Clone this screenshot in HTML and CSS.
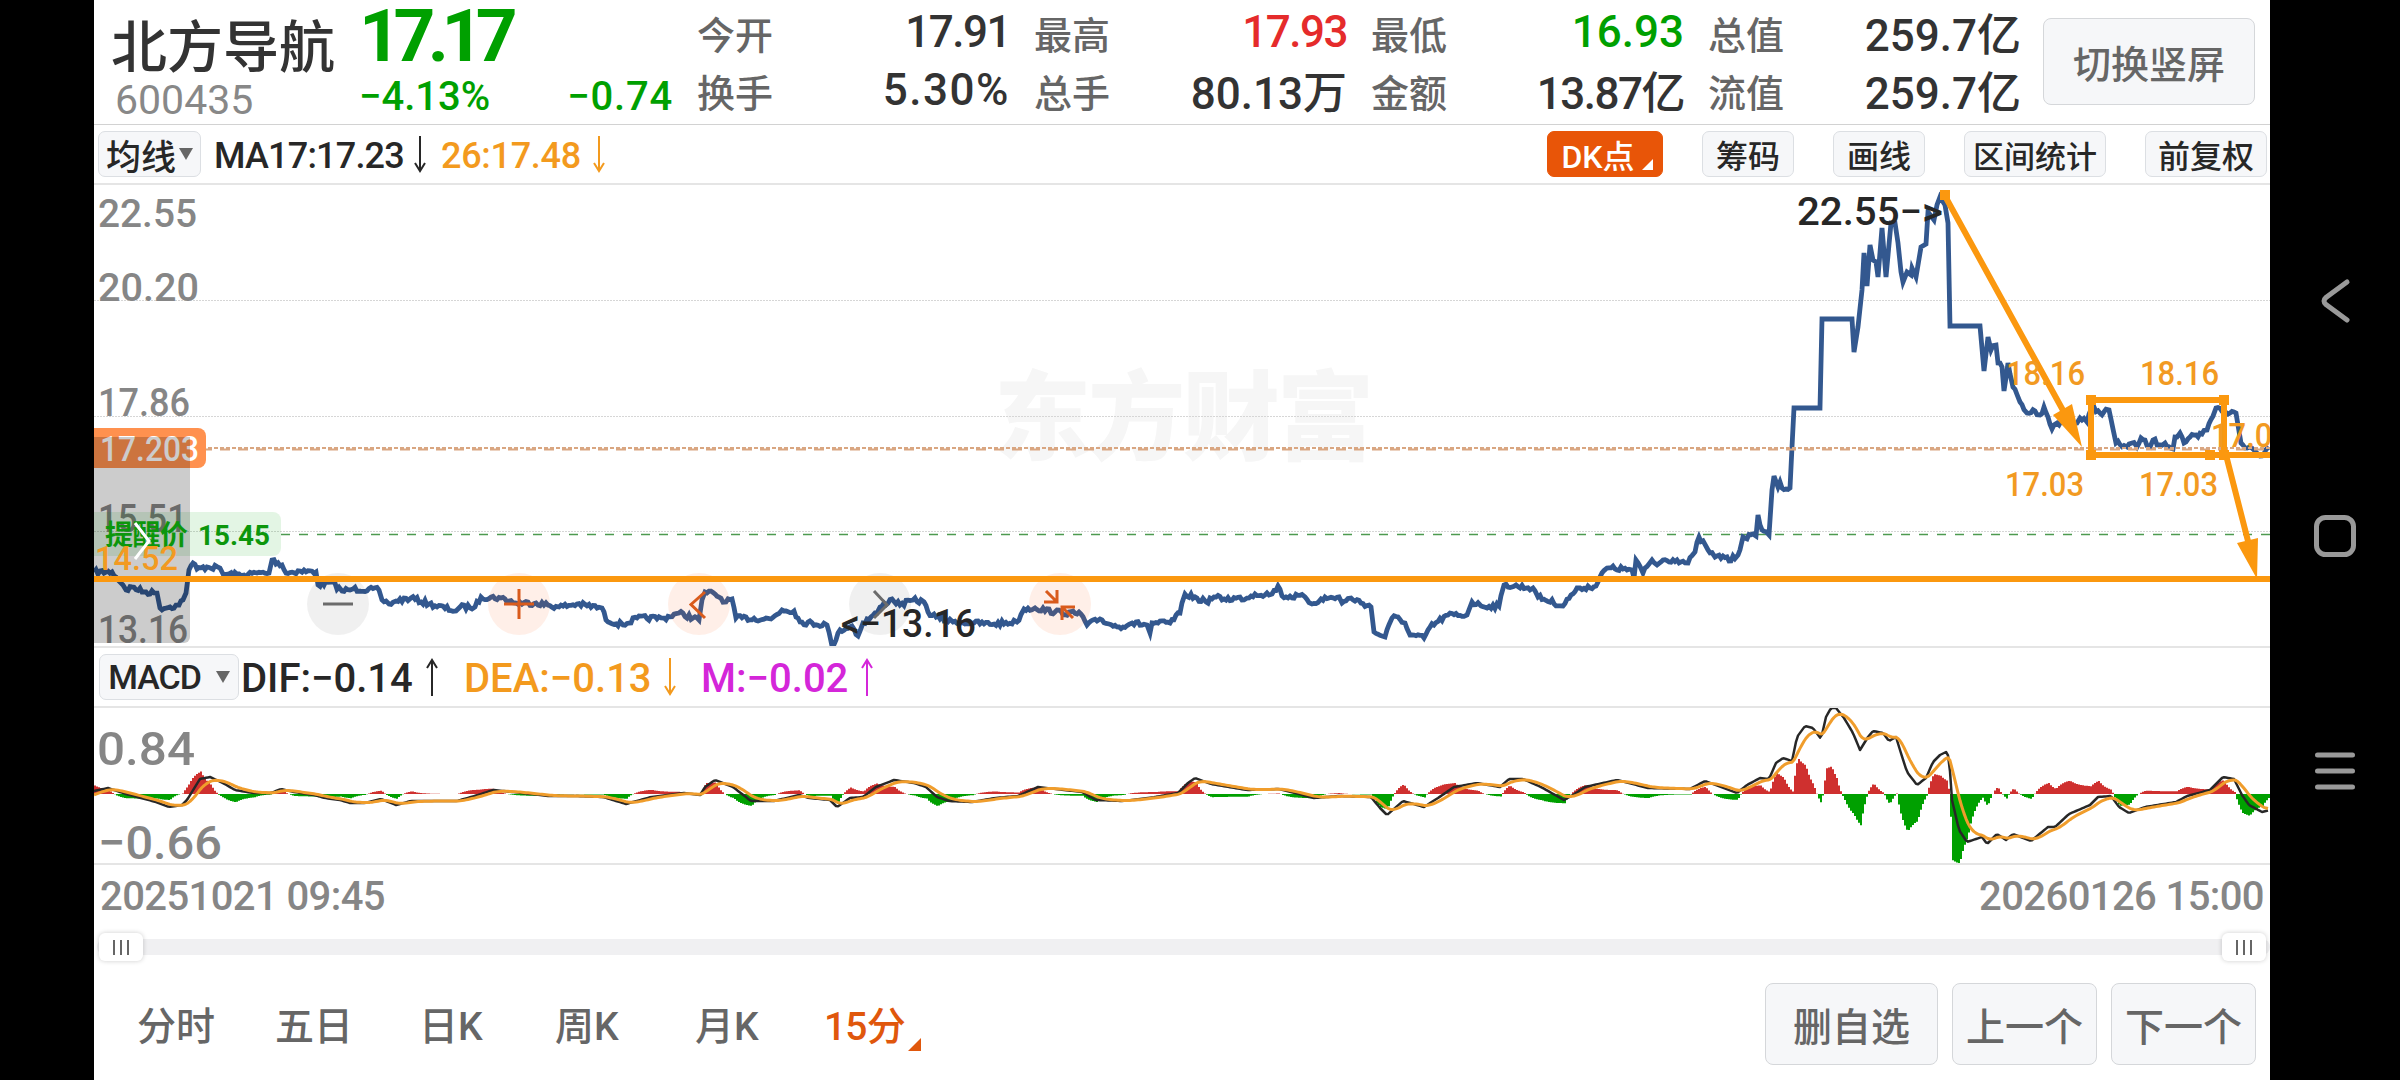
FILE: index.html
```html
<!DOCTYPE html>
<html lang="zh-CN">
<head>
    <meta charset="utf-8">
    <title>北方导航 600435</title>
    <link rel="stylesheet" href="styles.css">
</head>

<body>

  <div class="app">

    <div class="header">
      <div class="stock">
        <h1>北方导航</h1>
        <span class="code">600435</span>
      </div>
      <div class="price">
        <div class="now">17.17</div>
        <div class="change"><span>−4.13%</span><span class="diff">−0.74</span></div>
      </div>
      <div class="quotes">
        <div class="q"><label>今开</label><b>17.91</b></div>
        <div class="q"><label>最高</label><b class="red">17.93</b></div>
        <div class="q"><label>最低</label><b class="green loose">16.93</b></div>
        <div class="q"><label>总值</label><b class="loose">259.7亿</b></div>
        <div class="q"><label>换手</label><b class="looser">5.30%</b></div>
        <div class="q"><label>总手</label><b class="loose">80.13万</b></div>
        <div class="q"><label>金额</label><b>13.87亿</b></div>
        <div class="q"><label>流值</label><b class="loose">259.7亿</b></div>
      </div>
      <button class="btn btnSwitch">切换竖屏</button>
    </div>

    <div class="bar maBar">
      <button class="chip select">均线<i class="caret"></i></button>
      <span class="ma">MA17:17.23</span>
      <svg class="arrow" width="14" height="38" viewBox="0 0 14 38"><path d="M7 1V34M2 28L7 36L12 28"/></svg>
      <span class="ma orange">26:17.48</span>
      <svg class="arrow orange" width="14" height="38" viewBox="0 0 14 38"><path d="M7 1V34M2 28L7 36L12 28"/></svg>
      <div class="tools">
        <button class="chip dk">DK点<i class="corner"></i></button>
        <button class="chip">筹码</button>
        <button class="chip">画线</button>
        <button class="chip">区间统计</button>
        <button class="chip fq">前复权</button>
      </div>
    </div>

    <svg class="kline" width="2176" height="461" viewBox="94 185 2176 461">
      <text class="watermark" x="994" y="452" textLength="380">东方财富</text>
      <g class="grid">
        <path d="M94 300.5H2270M94 416.500H2270M94 531.5H2270"/>
      </g>
      <g class="axis">
        <text x="98" y="227" textLength="99" lengthAdjust="spacingAndGlyphs">22.55</text>
        <text x="98" y="301" textLength="101" lengthAdjust="spacingAndGlyphs">20.20</text>
        <text x="98" y="416" textLength="92" lengthAdjust="spacingAndGlyphs">17.86</text>
        <text x="98" y="532" textLength="89" lengthAdjust="spacingAndGlyphs">15.51</text>
        <text x="98" y="643" textLength="90" lengthAdjust="spacingAndGlyphs">13.16</text>
      </g>

      <path class="remindBox" d="M94 512H273a8 8 0 0 1 8 8V548a8 8 0 0 1-8 8H94Z"/>
      <path class="remindLine" d="M281 534.5H2270"/>

      <polyline id="priceLine" class="priceLine"/>
      <g class="avg">
        <path class="avg1" d="M94 448H2270"/>
        <path class="avg2" d="M94 449.5H2270"/>
      </g>
      <path class="priceTag" d="M94 428H198a8 8 0 0 1 8 8V460a8 8 0 0 1-8 8H94Z"/>
      <text class="priceTagText" x="100" y="461" textLength="99" lengthAdjust="spacingAndGlyphs">17.203</text>

      <g class="mark">
        <text x="1797" y="225" textLength="146" lengthAdjust="spacingAndGlyphs">22.55−&gt;</text>
        <text x="841" y="637" textLength="135" lengthAdjust="spacingAndGlyphs">&lt;−13.16</text>
      </g>

      <!-- zoom / pan buttons -->
      <g class="pads">
        <circle class="grayPad" cx="338" cy="604" r="31"/>
        <circle cx="519" cy="604" r="31"/>
        <circle cx="699" cy="604" r="31"/>
        <circle class="grayPad" cx="880" cy="604" r="31"/>
        <circle cx="1060" cy="604" r="31"/>
        <path class="grayIcon" d="M323 604H353M874 591L887 605L874 618"/>
        <path d="M504 604H534M519 589V619M705 592L691 604.5L705 618"/>
        <path d="M1046 591L1057 602M1057 590V602H1044M1073 618L1062 607M1062 620V607H1075"/>
      </g>

      <path class="side" d="M94 437H190V637a6 6 0 0 1-6 6H94Z"/>
      <text class="remindText" x="105" y="545" textLength="83">提醒价</text>
      <text class="remindText" x="198" y="545" textLength="72" lengthAdjust="spacingAndGlyphs">15.45</text>

      <!-- hand drawn lines -->
      <g class="draw">
        <path d="M94 579H2270"/>
        <path d="M1945 196L2065 414M2226 455L2249 545"/>
        <path d="M2091 400H2224V455H2091ZM2224 455H2270"/>
        <path class="solid" d="M2053 415L2072 404L2082 447ZM2237 543L2258 538L2257 579Z"/>
        <path class="solid" d="M1940 190h10v10h-10ZM2086 395h10v10h-10ZM2219 395h10v10h-10ZM2086 450h10v10h-10ZM2205 450h10v10h-10ZM2219 450h10v10h-10Z"/>
        <text x="95" y="570" textLength="83" lengthAdjust="spacingAndGlyphs">14.52</text>
        <text x="2006" y="385" textLength="79" lengthAdjust="spacingAndGlyphs">18.16</text>
        <text x="2140" y="385" textLength="79" lengthAdjust="spacingAndGlyphs">18.16</text>
        <text x="2005" y="496" textLength="79" lengthAdjust="spacingAndGlyphs">17.03</text>
        <text x="2139" y="496" textLength="79" lengthAdjust="spacingAndGlyphs">17.03</text>
        <text x="2211" y="447" textLength="79" lengthAdjust="spacingAndGlyphs">17.03</text>
      </g>
      <path class="sideArrow" d="M135 523L149 541L135 559"/>
    </svg>

    <div class="bar macdBar">
      <button class="chip select">MACD<i class="caret"></i></button>
      <span class="v dif">DIF:−0.14</span>
      <svg class="arrow" width="14" height="40" viewBox="0 0 14 40"><path d="M7 39V4M2 11L7 3L12 11"/></svg>
      <span class="v dea orange">DEA:−0.13</span>
      <svg class="arrow orange" width="14" height="40" viewBox="0 0 14 40"><path d="M7 1V36M2 29L7 37L12 29"/></svg>
      <span class="v m purple">M:−0.02</span>
      <svg class="arrow purple" width="14" height="40" viewBox="0 0 14 40"><path d="M7 39V4M2 11L7 3L12 11"/></svg>
    </div>

    <svg class="macd" width="2176" height="155" viewBox="94 708 2176 155">
      <g class="axis big">
        <text x="97" y="765" textLength="98" lengthAdjust="spacingAndGlyphs">0.84</text>
        <text x="98" y="859" textLength="124" lengthAdjust="spacingAndGlyphs">−0.66</text>
      </g>
      <path id="barsUp" class="barsUp"/>
      <path id="barsDown" class="barsDown"/>
      <polyline id="difLine" class="difLine"/>
      <polyline id="deaLine" class="deaLine"/>
    </svg>

    <div class="dates"><span>20251021 09:45</span><span>20260126 15:00</span></div>

    <div class="slider">
      <div class="handle"><i></i><i></i><i></i></div>
      <div class="handle"><i></i><i></i><i></i></div>
    </div>

    <div class="footer">
      <div class="tabs">
        <span>分时</span>
        <span>五日</span>
        <span>日K</span>
        <span>周K</span>
        <span>月K</span>
        <span class="active">15分<i class="corner"></i></span>
      </div>
      <div class="actions">
        <button class="btn wide">删自选</button>
        <button class="btn">上一个</button>
        <button class="btn">下一个</button>
      </div>
    </div>
  </div>

  <div class="nav">
    <svg width="48" height="48" viewBox="0 0 48 48"><path d="M36 5L15 20.500Q11 24 15 27.500L36 43"/></svg>
    <svg width="48" height="48" viewBox="0 0 48 48"><rect x="5.500" y="5.500" width="37" height="37" rx="9"/></svg>
    <svg width="48" height="48" viewBox="0 0 48 48"><path d="M6.500 8H41.500M6.500 24H41.500M6.500 40H41.500"/></svg>
  </div>

    <script type="text/javascript">
        const price = [
            [94,572],[112,572],[123,585],[126,590],[132,587],[144,592],[157,593],[160,608],[170,607],[179,605],[186,593],[189,570],
            [193,563],[197,569],[207,567],[220,568],[223,574],[244,575],[257,573],[269,573],[272,560],[282,565],[286,573],[300,571],
            [316,572],[318,585],[331,582],[342,591],[353,589],[379,590],[382,600],[389,604],[396,601],[411,598],[429,604],[456,611],
            [460,607],[475,607],[481,597],[501,598],[516,603],[536,603],[559,607],[577,604],[602,608],[606,620],[623,625],[637,618],
            [664,618],[679,613],[699,620],[702,600],[705,592],[715,594],[726,602],[732,599],[736,618],[771,619],[782,610],[794,611],
            [800,622],[827,625],[832,646],[836,640],[840,630],[852,626],[858,636],[863,623],[877,613],[880,607],[892,599],[900,605],
            [913,600],[924,602],[928,612],[936,617],[953,622],[974,623],[994,624],[1017,622],[1024,609],[1035,608],[1055,612],
            [1081,614],[1087,625],[1100,619],[1109,624],[1119,627],[1132,623],[1147,625],[1150,633],[1152,623],[1170,623],[1180,613],
            [1185,594],[1206,602],[1214,597],[1224,599],[1247,598],[1255,594],[1272,594],[1278,586],[1282,596],[1305,597],[1312,604],
            [1321,599],[1339,597],[1342,603],[1351,598],[1371,607],[1374,632],[1385,637],[1392,618],[1398,617],[1405,623],[1410,635],
            [1424,638],[1430,627],[1448,615],[1467,615],[1472,602],[1481,606],[1499,606],[1504,585],[1533,588],[1538,597],[1563,606],
            [1571,595],[1580,588],[1596,586],[1600,577],[1607,568],[1623,569],[1632,570],[1634,578],[1636,560],[1643,573],[1652,560],
            [1657,565],[1663,560],[1677,560],[1688,563],[1695,552],[1699,537],[1708,550],[1715,557],[1727,557],[1729,561],[1738,555],
            [1743,537],[1756,536],[1758,515],[1762,530],[1769,535],[1772,490],[1774,476],[1778,487],[1780,482],[1782,488],[1790,488],
            [1792,447],[1794,408],[1820,408],[1822,319],[1852,319],[1854,352],[1858,327],[1862,290],[1864,253],[1867,286],[1870,245],
            [1873,260],[1876,262],[1878,277],[1882,228],[1886,277],[1891,223],[1895,223],[1898,243],[1901,272],[1903,282],[1907,272],
            [1911,275],[1912,268],[1916,277],[1921,247],[1926,244],[1928,212],[1934,220],[1937,205],[1940,197],[1945,205],[1948,223],
            [1950,326],[1980,326],[1984,371],[1988,337],[1991,350],[1996,345],[1998,363],[2002,367],[2004,391],[2008,363],[2013,387],
            [2020,402],[2027,413],[2035,411],[2040,415],[2044,407],[2048,417],[2052,429],[2057,423],[2077,423],[2080,418],[2087,422],
            [2092,407],[2100,413],[2109,410],[2116,443],[2127,447],[2132,443],[2137,447],[2141,438],[2150,447],[2153,440],[2160,445],
            [2165,443],[2173,449],[2175,437],[2180,433],[2184,443],[2190,437],[2198,437],[2207,430],[2216,408],[2230,413],[2236,413],
            [2241,443],[2245,448],[2250,447],[2255,451],[2260,456],[2269,447]
        ];
        const dif = [
            [94,791],[108,788],[126,794],[141,798],[156,802],[169,807],[182,805],[187,800],[195,787],[200,779],[210,777],[223,783],
            [235,790],[253,793],[271,793],[281,789],[294,792],[314,795],[325,798],[340,800],[350,803],[365,803],[381,799],[396,805],
            [411,801],[457,801],[478,795],[493,790],[513,792],[549,796],[575,796],[603,797],[626,804],[651,797],[684,793],[700,795],
            [705,787],[715,780],[733,787],[751,801],[774,801],[799,795],[809,798],[830,800],[837,807],[850,798],[863,797],[876,787],
            [894,780],[914,783],[926,787],[937,797],[949,801],[972,802],[995,798],[1018,796],[1038,787],[1082,792],[1096,800],
            [1123,801],[1155,797],[1178,793],[1188,783],[1195,778],[1211,784],[1247,790],[1279,789],[1314,798],[1339,796],[1371,797],
            [1380,808],[1387,815],[1403,801],[1424,807],[1438,798],[1454,787],[1477,783],[1500,787],[1509,779],[1523,779],[1541,787],
            [1564,800],[1573,795],[1585,787],[1617,780],[1648,788],[1690,789],[1705,781],[1737,793],[1747,785],[1760,778],[1769,779],
            [1776,763],[1783,758],[1792,761],[1797,737],[1805,726],[1813,728],[1821,739],[1826,717],[1831,708],[1836,708],[1844,718],
            [1853,733],[1860,750],[1868,737],[1873,731],[1883,733],[1889,741],[1896,737],[1900,750],[1907,772],[1917,785],[1926,778],
            [1933,762],[1940,755],[1946,752],[1949,757],[1952,800],[1959,830],[1967,842],[1982,837],[1987,844],[1997,834],[2006,840],
            [2013,834],[2031,841],[2048,827],[2055,827],[2069,814],[2090,805],[2098,797],[2111,796],[2119,807],[2129,813],[2145,807],
            [2176,802],[2187,796],[2210,790],[2223,777],[2234,779],[2242,795],[2249,805],[2262,812],[2270,810]
        ];
        const zero = 794;

        // small repeatable noise so the line keeps its tick texture
        let seed = 7;
        function rnd() {
            seed = (seed * 16807) % 2147483647;
            return seed / 2147483647 - 0.5;
        }

        function sample(points, step) {
            const out = [];
            let i = 0;
            for (let x = 94; x <= 2269; x += step) {
                while (i < points.length - 2 && points[i + 1][0] < x) i++;
                const a = points[i], b = points[i + 1];
                out.push([x, a[1] + (b[1] - a[1]) * (x - a[0]) / (b[0] - a[0])]);
            }
            return out;
        }

        const line = [];
        for (let i = 0; i < price.length; i++) {
            const a = price[i], b = price[i + 1];
            line.push(a);
            if (!b || (a[0] > 1785 && a[0] < 1985)) continue;
            for (let x = a[0] + 2; x < b[0] - 1; x += 2) {
                line.push([x, a[1] + (b[1] - a[1]) * (x - a[0]) / (b[0] - a[0]) + rnd() * 5]);
            }
        }
        document.getElementById("priceLine").setAttribute("points", line.join(" "));

        const difs = sample(dif, 2);
        const deas = [];
        let up = "", down = "";
        let dea = 796;
        difs.forEach(([x, y]) => {
            dea += (y - dea) * 0.2;
            deas.push([x, dea]);
            const h = (y - dea) * 2.1;
            if (h < 0) {
                up += `M${x} ${zero}v${h}h2v${-h}Z`;
            } else {
                down += `M${x} ${zero}v${h}h2v${-h}Z`;
            }
        });
        document.getElementById("barsUp").setAttribute("d", up);
        document.getElementById("barsDown").setAttribute("d", down);
        document.getElementById("difLine").setAttribute("points", difs.join(" "));
        document.getElementById("deaLine").setAttribute("points", deas.join(" "));
    </script>
</body>

</html>
```
FILE: styles.css
```css
* {
  box-sizing: border-box;
}
body {
  margin: 0;
  height: 1080px;
  background: #000;
  display: flex;
  padding-left: 94px;
  overflow: hidden;
  color: #272727;
  font-family: Roboto, "Noto Sans CJK SC", sans-serif;
  font-weight: 500;
}

.app {
  width: 2176px;
  height: 1080px;
  background: #fff;
  display: flex;
  flex-direction: column;
}
svg {
  display: block;
}
button {
  font-family: inherit;
  font-weight: 500;
  padding: 0;
  color: inherit;
  white-space: nowrap;
}

.header {
  height: 125px;
  display: flex;
  border-bottom: 1px solid #d2d2d2;
}
.stock {
  width: 265px;
  padding: 14px 0 0 17px;
}
h1 {
  margin: 0;
  font-size: 56px;
  font-weight: 500;
  line-height: 68px;
  color: #333;
}
.code {
  display: block;
  padding-left: 4px;
  font-size: 41px;
  line-height: 36px;
  font-weight: 400;
  color: #888;
}
.price {
  width: 338px;
  color: #00a000;
}
.now {
  font-size: 73px;
  line-height: 72px;
  font-weight: 700;
  letter-spacing: -7.500px;
}
.change {
  display: flex;
  justify-content: space-between;
  width: 314px;
  font-size: 40px;
  line-height: 50px;
}
.change .diff {
  letter-spacing: .8px;
}
.quotes {
  display: grid;
  grid-template-columns: repeat(4, 313px);
  grid-auto-rows: 58px;
  column-gap: 24px;
  padding-top: 3px;
}
.q {
  display: flex;
  justify-content: space-between;
  align-items: center;
}
.q label {
  font-size: 38px;
  color: #666;
}
.q b {
  font-size: 44px;
  font-weight: 500;
  letter-spacing: -1.500px;
  color: #333;
}
.q .loose {
  letter-spacing: 0;
}
.q .looser {
  letter-spacing: 1.500px;
}
.q .red {
  color: #e52b2b;
}
.q .green {
  color: #00a000;
}

.btn {
  width: 145px;
  height: 82px;
  font-size: 39px;
  color: #666;
  background: #f6f7f9;
  border: 1px solid #d5d7da;
  border-radius: 8px;
}
.btnSwitch {
  width: 212px;
  height: 87px;
  font-size: 38px;
  margin: 18px 0 0 22px;
}

.bar {
  display: flex;
  align-items: center;
  border-bottom: 2px solid #e5e5e5;
}
.maBar {
  height: 60px;
  padding: 0 3px 0 4px;
}
.chip {
  display: flex;
  align-items: center;
  justify-content: center;
  width: 92px;
  height: 46px;
  font-size: 32px;
  background: #f6f7f9;
  border: 1px solid #dcdfe3;
  border-radius: 7px;
}
.maBar .select {
  width: 103px;
  font-size: 35px;
}
.caret {
  margin-left: 3px;
  border: 7px solid transparent;
  border-top: 12px solid #666;
  border-bottom: 0;
}
.ma {
  font-size: 36px;
  width: 193px;
  margin-left: 13px;
}
.ma.orange {
  width: 145px;
  margin-left: 14px;
}
.arrow {
  fill: none;
  stroke: currentColor;
  stroke-width: 2;
}
.maBar .arrow {
  margin-left: 6px;
}
.maBar .ma {
  letter-spacing: -.8px;
  padding-top: 3px;
}
.maBar .ma.orange {
  letter-spacing: -.3px;
}
.orange {
  color: #f39a1e;
}
.purple {
  color: #d426d9;
}
.tools {
  display: flex;
  gap: 39px;
  margin-left: auto;
}
.chip.dk {
  width: 116px;
  color: #fff;
  background: #e85508;
  border-color: #e85508;
  font-size: 32px;
}
.tools .chip:nth-child(4) {
  width: 142px;
  font-size: 31px;
}
.chip.fq {
  width: 122px;
}
.corner {
  align-self: flex-end;
  margin: 0 -4px 6px 7px;
  border-left: 11px solid transparent;
  border-bottom: 11px solid currentColor;
}

.kline text,
.macd text {
  font-weight: 500;
}
.watermark {
  font-size: 97px;
  fill: #f6f6f6;
}
.kline .watermark {
  font-weight: 900;
}
.grid {
  stroke: #d6d6d6;
  stroke-dasharray: 2 1;
}
.axis {
  font-size: 39px;
  fill: #868686;
}
.axis.big {
  font-size: 47px;
}
.remindBox {
  fill: rgba(0, 160, 10, .11);
}
.remindLine {
  stroke: #4d9a50;
  stroke-width: 1.500;
  stroke-dasharray: 9 9;
}
.remindText {
  font-size: 28px;
  fill: #0c960c;
}
.kline .remindText {
  font-weight: 700;
}
.priceLine {
  fill: none;
  stroke: #33588f;
  stroke-width: 4.800;
}
.avg path {
  stroke: #d9a681;
  stroke-width: 2;
}
.avg .avg1 {
  stroke-dasharray: 4 2;
}
.avg .avg2 {
  stroke-dasharray: 10 8;
}
.priceTag {
  fill: #ff914f;
}
.priceTagText {
  font-size: 35px;
  fill: #fff;
}
.mark {
  font-size: 39px;
  fill: #272727;
}
.pads circle {
  fill: rgba(255, 100, 30, .1);
}
.pads .grayPad {
  fill: rgba(0, 0, 0, .06);
}
.pads path {
  fill: none;
  stroke: #d95b1c;
  stroke-width: 3;
}
.pads .grayIcon {
  stroke: #6b6b6b;
}
.side {
  fill: rgba(0, 0, 0, .2);
}
.sideArrow {
  fill: none;
  stroke: #fff;
  stroke-width: 3;
}
.draw path {
  fill: none;
  stroke: #fb980f;
  stroke-width: 6;
}
.draw .solid {
  fill: #fb980f;
  stroke: none;
}
.draw text {
  font-size: 33px;
  fill: #f29a22;
}
.kline {
  flex: none;
}

.macdBar {
  height: 62px;
  padding-left: 5px;
  border-top: 2px solid #e5e5e5;
}
.macdBar .select {
  width: 140px;
  font-size: 34px;
  letter-spacing: -1px;
}
.macdBar .caret {
  margin-left: 15px;
}
.v {
  font-size: 40px;
  padding-top: 2px;
}
.dif {
  width: 184px;
  margin-left: 2px;
}
.dea {
  width: 199px;
  margin-left: 25px;
}
.m {
  width: 159px;
  margin-left: 24px;
}
.macd {
  flex: none;
}
.barsUp {
  fill: #cf302f;
}
.barsDown {
  fill: #00a000;
}
.difLine,
.deaLine {
  fill: none;
  stroke: #272727;
  stroke-width: 2.500;
  stroke-linejoin: round;
}
.deaLine {
  stroke: #f09d2c;
  stroke-width: 3;
}

.dates {
  display: flex;
  justify-content: space-between;
  height: 70px;
  padding: 8px 6px 0 6px;
  border-top: 2px solid #e5e5e5;
  font-size: 40px;
  letter-spacing: -.600px;
  color: #868686;
}
.slider {
  display: flex;
  justify-content: space-between;
  align-items: center;
  height: 16px;
  margin: 6px 0 0 3px;
  padding: 0 4px 0 2px;
  background: #f0f0f2;
  border-radius: 8px;
}
.handle {
  display: flex;
  justify-content: center;
  align-items: center;
  gap: 5px;
  width: 44px;
  height: 28px;
  background: #fff;
  border-radius: 6px;
  box-shadow: 0 0 5px rgba(0, 0, 0, .2);
}
.handle i {
  width: 2px;
  height: 15px;
  background: #666;
}

.footer {
  display: flex;
  justify-content: space-between;
  padding: 28px 14px 0 43px;
}
.tabs {
  display: flex;
  height: 80px;
  align-items: center;
  font-size: 39px;
  color: #666;
}
.tabs span {
  width: 140px;
}
.tabs span:nth-child(1) {
  width: 138px;
}
.tabs span:nth-child(2) {
  width: 144px;
}
.tabs span:nth-child(3) {
  width: 136px;
}
.tabs .active {
  display: flex;
  margin-left: -11px;
  color: #e0570c;
  letter-spacing: -.800px;
}
.tabs .corner {
  margin: 0 0 0 3px;
  border-left-width: 13px;
  border-bottom-width: 13px;
}
.actions {
  display: flex;
  gap: 14px;
}
.actions .wide {
  width: 173px;
}

.nav {
  width: 130px;
  display: flex;
  flex-direction: column;
  align-items: center;
  gap: 187px;
  padding-top: 277px;
}
.nav svg {
  fill: none;
  stroke: #999;
  stroke-width: 5;
  stroke-linecap: round;
}
```
